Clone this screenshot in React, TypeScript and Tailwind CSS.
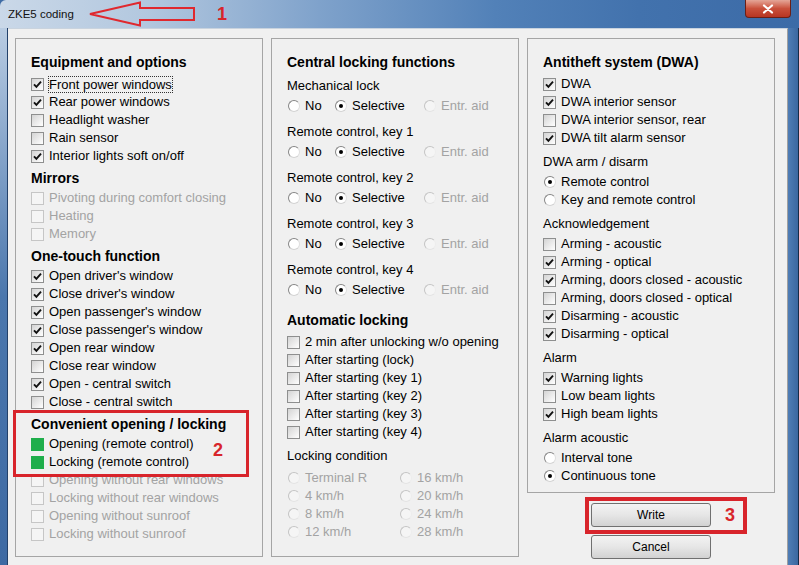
type CS = "on" | "off" | "dis" | "green"

function Check({ s }: { s: CS }) {
  if (s === "green") return <span className="w-[13px] h-[13px] bg-[#1fae4b] shrink-0" />
  return (
    <span
      className={`w-[13px] h-[13px] border shrink-0 flex items-center justify-center ${
        s === "dis" ? "border-[#c6c6c6] bg-[#f5f5f5]" : "border-[#8e8f8f] bg-gradient-to-br from-[#d4d4d4] to-white"
      }`}>
      {s === "on" && (
        <svg width="9" height="9" viewBox="0 0 9 9">
          <path d="M1 4.3 L3.4 6.8 L8 1.6" fill="none" stroke="#111" strokeWidth="1.9" />
        </svg>
      )}
    </span>
  )
}

function Radio({ on, dis }: { on?: boolean; dis?: boolean }) {
  return (
    <span
      className={`w-[12px] h-[12px] rounded-full border shrink-0 flex items-center justify-center ${
        dis
          ? "border-[#c4c4c4] border-r-[#ededed] border-b-[#e4e4e4] bg-[#f5f5f5]"
          : "border-[#858585] border-r-[#dedede] border-b-[#d2d2d2] bg-white"
      }`}>
      {on && <span className="w-[4px] h-[4px] rounded-full bg-black" />}
    </span>
  )
}

function Item({ s, label, focus, className = "" }: { s: CS; label: string; focus?: boolean; className?: string }) {
  return (
    <div className={`flex items-center h-[18px] gap-[5px] ${className}`}>
      <Check s={s} />
      <span
        className={`${s === "dis" ? "text-[#a3a3a3]" : "text-black"} ${
          focus ? "outline outline-1 outline-dotted outline-[#333] outline-offset-0 leading-[15px]" : ""
        }`}>
        {label}
      </span>
    </div>
  )
}

function Opt({ on, dis, label, w }: { on?: boolean; dis?: boolean; label: string; w?: string }) {
  return (
    <div className={`flex items-center h-[18px] gap-[5px] ${w ?? ""}`}>
      <Radio on={on} dis={dis} />
      <span className={dis ? "text-[#a3a3a3]" : "text-black"}>{label}</span>
    </div>
  )
}

function Heading({ children, className = "" }: { children: string; className?: string }) {
  return <div className={`h-[18px] leading-[18px] text-[14px] font-bold ${className}`}>{children}</div>
}

function Label({ children, className = "" }: { children: string; className?: string }) {
  return <div className={`h-[18px] ${className}`}>{children}</div>
}

function KeyGroup({ label, first }: { label: string; first?: boolean }) {
  return (
    <div className={first ? "" : "mt-[8px]"}>
      <Label>{label}</Label>
      <div className="flex mt-[2px] pl-[1px]">
        <Opt label="No" w="w-[47px]" />
        <Opt on label="Selective" w="w-[89px]" />
        <Opt dis label="Entr. aid" />
      </div>
    </div>
  )
}

const equipment: [CS, string][] = [
  ["on", "Front power windows"],
  ["on", "Rear power windows"],
  ["off", "Headlight washer"],
  ["off", "Rain sensor"],
  ["on", "Interior lights soft on/off"],
]
const mirrors = ["Pivoting during comfort closing", "Heating", "Memory"]
const oneTouch: [CS, string][] = [
  ["on", "Open driver's window"],
  ["on", "Close driver's window"],
  ["on", "Open passenger's window"],
  ["on", "Close passenger's window"],
  ["on", "Open rear window"],
  ["off", "Close rear window"],
  ["on", "Open - central switch"],
  ["off", "Close - central switch"],
]
const convenient: [CS, string][] = [
  ["green", "Opening (remote control)"],
  ["green", "Locking (remote control)"],
  ["dis", "Opening without rear windows"],
  ["dis", "Locking without rear windows"],
  ["dis", "Opening without sunroof"],
  ["dis", "Locking without sunroof"],
]
const autoLock = [
  "2 min after unlocking w/o opening",
  "After starting (lock)",
  "After starting (key 1)",
  "After starting (key 2)",
  "After starting (key 3)",
  "After starting (key 4)",
]
const speeds: [string, string][] = [
  ["Terminal R", "16 km/h"],
  ["4 km/h", "20 km/h"],
  ["8 km/h", "24 km/h"],
  ["12 km/h", "28 km/h"],
]
const dwa: [CS, string][] = [
  ["on", "DWA"],
  ["on", "DWA interior sensor"],
  ["off", "DWA interior sensor, rear"],
  ["on", "DWA tilt alarm sensor"],
]
const ack: [CS, string][] = [
  ["off", "Arming - acoustic"],
  ["on", "Arming - optical"],
  ["on", "Arming, doors closed - acoustic"],
  ["off", "Arming, doors closed - optical"],
  ["on", "Disarming - acoustic"],
  ["on", "Disarming - optical"],
]
const alarm: [CS, string][] = [
  ["on", "Warning lights"],
  ["off", "Low beam lights"],
  ["on", "High beam lights"],
]

function Button({ children, className = "" }: { children: string; className?: string }) {
  return (
    <button
      className={`w-[120px] h-[24px] mx-auto flex items-center justify-center text-[12px] text-black rounded-[3px] border border-[#707070] bg-gradient-to-b from-[#f3f3f3] via-[#e6e6e6] to-[#d2d2d2] ${className}`}>
      {children}
    </button>
  )
}

export default function App() {
  return (
    <div className="relative w-[799px] h-[565px] overflow-hidden flex flex-col bg-[#3f6ca5] font-['Liberation_Sans',Arial,sans-serif] text-[13px] leading-[18px] text-black">
      {/* title bar */}
      <div className="h-[28px] shrink-0 flex items-start rounded-t-[6px] bg-[linear-gradient(90deg,#cad8e8_0%,#b3c8df_18%,#7fa2cb_40%,#5281b8_62%,#4272ad_80%,#3c6ba7_100%)]">
        <span className="pl-[8px] pt-[6px] text-[11.5px] leading-[16px] text-[#111]">ZKE5 coding</span>
        <div className="flex-1" />
        <div className="mr-[8px] w-[46px] h-[18px] rounded-b-[4px] border border-t-0 border-[#6b1f16] bg-gradient-to-b from-[#e4a597] via-[#c9503b] to-[#b73522] flex items-center justify-center">
          <svg width="12" height="10" viewBox="0 0 12 10">
            <path d="M2 1.5 L10 8.5 M10 1.5 L2 8.5" stroke="#fff" strokeWidth="2.2" strokeLinecap="round" />
          </svg>
        </div>
      </div>

      <div className="flex flex-1 min-h-0">
        <div className="w-[8px] shrink-0 border-r border-[#23416a] bg-gradient-to-b from-[#b9cce2] via-[#4b77ad] to-[#3e6aa3]" />
        <div className="flex-1 bg-[#f0f0f0] border-t border-[#c9d3de] border-r border-r-[#a0a0a0] pl-[7px] pt-[9px]">
          <div className="flex gap-[8px] items-start">
            {/* left column */}
            <div className="w-[248px] h-[519px] border border-[#a5a5a5] pl-[15px] pt-[14px]">
              <Heading className="mb-[4px]">Equipment and options</Heading>
              {equipment.map(([s, l], i) => (
                <Item key={l} s={s} label={l} focus={i === 0} />
              ))}
              <Heading className="mt-[4px] mb-[2px]">Mirrors</Heading>
              {mirrors.map(l => (
                <Item key={l} s="dis" label={l} />
              ))}
              <Heading className="mt-[4px] mb-[2px]">One-touch function</Heading>
              {oneTouch.map(([s, l]) => (
                <Item key={l} s={s} label={l} />
              ))}
              <Heading className="mt-[4px] mb-[2px]">Convenient opening / locking</Heading>
              {convenient.map(([s, l]) => (
                <Item key={l} s={s} label={l} />
              ))}
            </div>

            {/* middle column */}
            <div className="w-[248px] h-[519px] border border-[#a5a5a5] pl-[15px] pt-[14px]">
              <Heading className="mb-[6px]">Central locking functions</Heading>
              <KeyGroup first label="Mechanical lock" />
              <KeyGroup label="Remote control, key 1" />
              <KeyGroup label="Remote control, key 2" />
              <KeyGroup label="Remote control, key 3" />
              <KeyGroup label="Remote control, key 4" />
              <Heading className="mt-[12px] mb-[4px]">Automatic locking</Heading>
              {autoLock.map(l => (
                <Item key={l} s="off" label={l} />
              ))}
              <Label className="mt-[6px]">Locking condition</Label>
              <div className="mt-[4px] pl-[1px]">
                {speeds.map(([a, b]) => (
                  <div key={a} className="flex">
                    <Opt dis label={a} w="w-[112px]" />
                    <Opt dis label={b} />
                  </div>
                ))}
              </div>
            </div>

            {/* right column */}
            <div className="w-[248px] flex flex-col">
              <div className="h-[455px] border border-[#a5a5a5] pl-[15px] pt-[14px]">
                <Heading className="mb-[4px]">Antitheft system (DWA)</Heading>
                {dwa.map(([s, l]) => (
                  <Item key={l} s={s} label={l} />
                ))}
                <Label className="mt-[6px]">DWA arm / disarm</Label>
                <div className="mt-[2px] pl-[1px]">
                  <Opt on label="Remote control" />
                  <Opt label="Key and remote control" />
                </div>
                <Label className="mt-[6px]">Acknowledgement</Label>
                <div className="mt-[2px]">
                  {ack.map(([s, l]) => (
                    <Item key={l} s={s} label={l} />
                  ))}
                </div>
                <Label className="mt-[6px]">Alarm</Label>
                <div className="mt-[2px]">
                  {alarm.map(([s, l]) => (
                    <Item key={l} s={s} label={l} />
                  ))}
                </div>
                <Label className="mt-[6px]">Alarm acoustic</Label>
                <div className="mt-[2px] pl-[1px]">
                  <Opt label="Interval tone" />
                  <Opt on label="Continuous tone" />
                </div>
              </div>
              <Button className="mt-[10px]">Write</Button>
              <Button className="mt-[8px]">Cancel</Button>
            </div>
          </div>
        </div>
        <div className="w-[11px] shrink-0 border-r border-[#162b47] bg-gradient-to-r from-[#4f7db5] to-[#3b67a0]" />
      </div>

      {/* annotations */}
      <svg className="absolute left-0 top-0" width="240" height="30" viewBox="0 0 240 30">
        <polygon
          points="90,14 140,2.5 140,8 194,8 194,20 140,20 140,25.5"
          fill="none"
          stroke="#e0282e"
          strokeWidth="2"
          strokeLinejoin="miter"
        />
      </svg>
      <span className="absolute left-[217px] top-[4px] text-[18px] leading-[20px] font-bold text-[#d8252b]">1</span>
      <div className="absolute left-[13px] top-[410px] w-[236px] h-[67px] border-[3px] border-[#d8242b]" />
      <span className="absolute left-[213px] top-[440px] text-[18px] leading-[20px] font-bold text-[#d8252b]">2</span>
      <div className="absolute left-[585px] top-[497px] w-[162px] h-[37px] border-[4px] border-[#d8242b]" />
      <span className="absolute left-[725px] top-[505px] text-[18px] leading-[20px] font-bold text-[#d8252b]">3</span>
    </div>
  )
}
